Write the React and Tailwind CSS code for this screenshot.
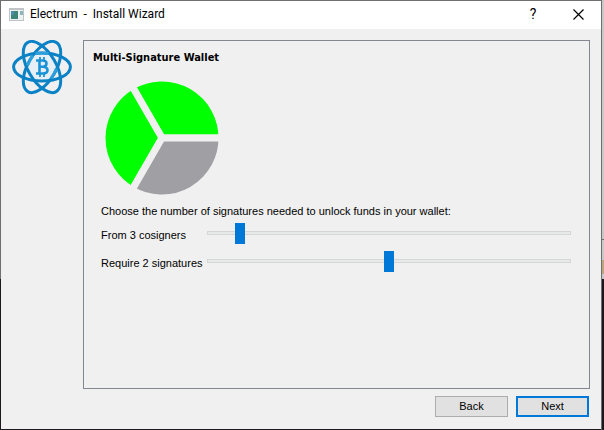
import { useState } from "react";

const ORBITS = [0, 60, 120];

function Logo() {
  return (
    <svg viewBox="0 0 60 56" className="h-14 w-15 shrink-0" role="img" aria-label="Electrum">
      <path d="M22 14H38L45 27L38 40H22L15 27Z" fill="#e6eff5" />
      <g fill="none" stroke="#0b82c5" strokeWidth="3">
        {ORBITS.map((angle) => (
          <ellipse key={angle} cx="30" cy="27" rx="28.4" ry="14" transform={`rotate(${angle} 30 27)`} />
        ))}
      </g>
      <g fill="none" stroke="#2f9fdc" strokeWidth="3">
        <path d="M23.5 13.5Q30 12.6 36.5 13.5M21 15.5Q17.5 20.5 15.5 25.5M44.5 28.5Q42.5 33.5 39 38.5" />
      </g>
      <g fill="none" stroke="#1c93d6">
        <path
          d="M24 20.5H31Q34.5 20.7 34.5 23.6T31 26.8H27.5M31 26.8Q35.5 27.2 35.5 30.2T31 33.5H24M27.5 20.5V33.5"
          strokeWidth="2.6"
        />
        <path d="M28 17V20M32 17V20M28 34V37M32 34V37" strokeWidth="1.8" />
      </g>
    </svg>
  );
}

function slicePath(index, total) {
  const point = (i) => {
    const a = (i / total) * 2 * Math.PI;
    return `${60 + 60 * Math.cos(a)} ${60 - 60 * Math.sin(a)}`;
  };
  return `M60 60L${point(index)}A60 60 0 0 0 ${point(index + 1)}Z`;
}

function CosignerPie({ required, total }) {
  return (
    <svg viewBox="0 0 120 120" className="size-30">
      {Array.from({ length: total }, (_, i) => (
        <path
          key={i}
          d={slicePath(i, total)}
          fill={i < required ? "#00ff00" : "#a0a0a4"}
          stroke="#f0f0f0"
          strokeWidth="7"
        />
      ))}
    </svg>
  );
}

function SliderRow({ id, label, min, max, value, onChange }) {
  return (
    <div className="flex h-7 items-start">
      <label htmlFor={id} className="w-[106px] shrink-0 pt-1 leading-4 whitespace-nowrap">
        {label}
      </label>
      <input
        id={id}
        type="range"
        min={min}
        max={max}
        value={value}
        onChange={(e) => onChange(Number(e.target.value))}
        className="h-5 min-w-0 flex-1 appearance-none bg-transparent [&::-webkit-slider-runnable-track]:h-1 [&::-webkit-slider-runnable-track]:border [&::-webkit-slider-runnable-track]:border-[#d6d6d6] [&::-webkit-slider-runnable-track]:bg-[#e7eaea] [&::-webkit-slider-thumb]:-mt-[9px] [&::-webkit-slider-thumb]:h-[21px] [&::-webkit-slider-thumb]:w-[10px] [&::-webkit-slider-thumb]:appearance-none [&::-webkit-slider-thumb]:bg-[#0078d7]"
      />
    </div>
  );
}

export default function App() {
  const [total, setTotal] = useState(3);
  const [required, setRequired] = useState(2);

  return (
    <div className="flex min-h-screen bg-[#1b191b] font-['Liberation_Sans',sans-serif] text-[11px] text-black">
      <div className="flex w-px flex-col">
        <div className="h-[279px] bg-[#6f6f6f]" />
      </div>
      <div className="mb-px flex min-w-0 flex-1 flex-col border-t border-[#6f6f6f] bg-[#f0f0f0]">
        <header className="flex h-7 items-center bg-white pb-0.5 pl-2 font-['Roboto',sans-serif] text-[12px]">
          <svg viewBox="0 0 15 13" className="mr-[6px] h-[13px] w-[15px]">
            <path d="M0 0H15V13H0Z" fill="#c0c4c6" />
            <path d="M1 2H14V12H1Z" fill="#eef1f1" />
            <path d="M2 3H9V11H2Z" fill="#3f8578" />
            <path d="M2 3H5V7H2Z" fill="#4d8cae" />
            <path d="M11 3H14V7H11Z" fill="#8db4bd" />
          </svg>
          <h1 className="flex-1 whitespace-pre">Electrum  -  Install Wizard</h1>
          <button type="button" className="h-6 w-11 text-[14px]" aria-label="Help">?</button>
          <button type="button" className="flex h-6 w-[46px] items-center justify-center" aria-label="Close">
            <svg viewBox="0 0 11 11" className="size-[11px]" fill="none" stroke="#000" strokeWidth="1.2">
              <path d="M.5 .5L10.5 10.5M10.5 .5L.5 10.5" />
            </svg>
          </button>
        </header>
        <div className="flex flex-1 gap-[11px] pt-[11px] pr-[11px] pl-[11px]">
          <Logo />
          <main className="min-w-0 flex-1 border border-[#828790] px-[9px] pt-[9px]">
            <h2 className="font-['DejaVu_Sans_Condensed','DejaVu_Sans',sans-serif] text-[11px] leading-4 font-bold">
              Multi-Signature Wallet
            </h2>
            <div className="pt-3 pr-[9px] pl-2">
              <div className="pl-px">
                <CosignerPie required={required} total={total} />
              </div>
              <p className="pt-[5px] pb-1 leading-4">
                Choose the number of signatures needed to unlock funds in your wallet:
              </p>
              <SliderRow
                id="cosigners"
                label={`From ${total} cosigners`}
                min={2}
                max={15}
                value={total}
                onChange={(n) => {
                  setTotal(n);
                  setRequired(Math.min(required, n));
                }}
              />
              <SliderRow
                id="signatures"
                label={`Require ${required} signatures`}
                min={1}
                max={total}
                value={required}
                onChange={setRequired}
              />
            </div>
          </main>
        </div>
        <footer className="flex justify-end gap-2 pt-[7px] pr-3 pb-3">
          <button type="button" className="h-[21px] w-[73px] border border-[#adadad] bg-[#e1e1e1]">Back</button>
          <button type="button" className="h-[21px] w-[73px] border-2 border-[#0078d7] bg-[#e1e1e1]">Next</button>
        </footer>
      </div>
      <div className="flex w-[3px] flex-col border-l border-[#6f6f6f]">
        <div className="h-[239px] bg-[#c8c8c8]" />
        <div className="h-px bg-[#6f6f6f]" />
        <div className="h-5 bg-[#c8c8c8]" />
        <div className="h-[14px] bg-[#bda67c]" />
        <div className="h-[5px] bg-[#c8c8c8]" />
      </div>
    </div>
  );
}
